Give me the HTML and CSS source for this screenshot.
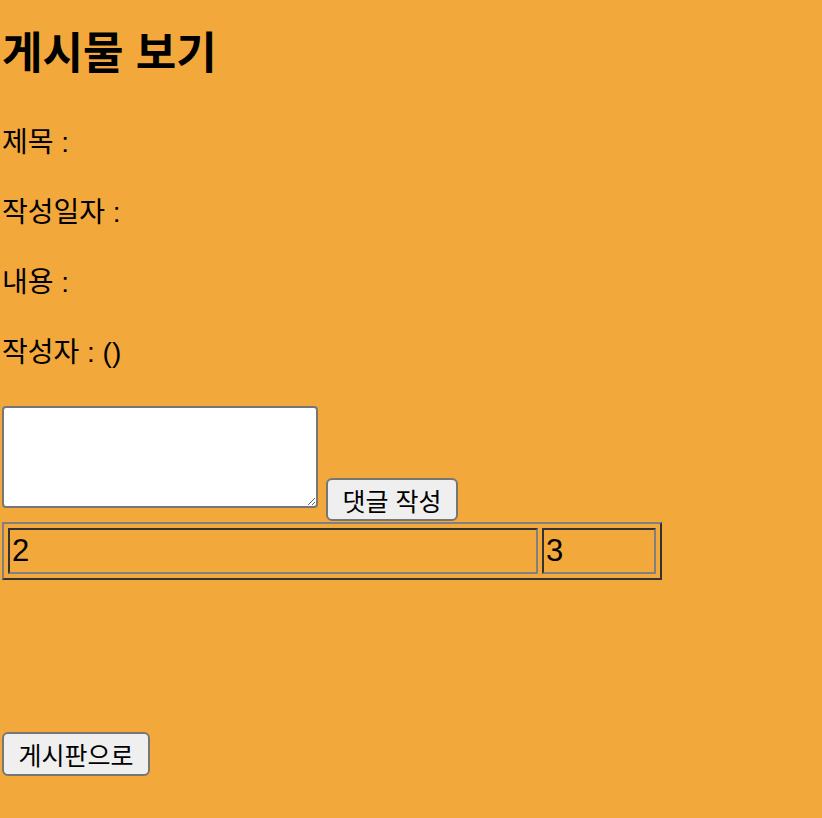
FILE: index.html
```html
<!DOCTYPE html>
<html lang="ko">
<head>
<meta charset="utf-8">
<title>게시물 보기</title>
<link rel="stylesheet" href="styles.css">
</head>
<body>
<div class="page">
  <h1 class="title">게시물 보기</h1>
  <p class="field">제목 : </p>
  <p class="field">작성일자 : </p>
  <p class="field">내용 : </p>
  <p class="field">작성자 : ()</p>
  <form class="comment-form">
    <textarea class="comment-input"></textarea>
    <button type="button" class="btn btn-comment">댓글 작성</button>
  </form>
  <table class="comments">
    <tr>
      <td class="cell cell-wide">2</td>
      <td class="cell cell-narrow">3</td>
    </tr>
  </table>
  <div class="spacer"></div>
  <button type="button" class="btn btn-back">게시판으로</button>
</div>
</body>
</html>
```

FILE: styles.css
```css
html, body {
  margin: 0;
  padding: 0;
  background: #f3a83c;
}
body {
  font-family: "Liberation Sans", "Noto Sans CJK KR", sans-serif;
  color: #000;
}
.page {
  padding: 0 2px;
}
.title {
  margin: 22px 0 40px;
  font-size: 44px;
  line-height: 64px;
  font-weight: 700;
}
.field {
  margin: 36px 0;
  font-size: 28px;
  line-height: 34px;
}
.comment-form {
  display: flex;
  align-items: flex-start;
  gap: 8px;
  margin-top: 36px;
  height: 116px;
}
.comment-input {
  box-sizing: border-box;
  width: 316px;
  height: 102px;
  margin: 0;
  border: 2px solid #767676;
  border-radius: 4px;
  background: #fff;
}
.btn {
  box-sizing: border-box;
  margin: 0;
  background: #efefef;
  border: 2px solid #767676;
  border-radius: 6px;
  font-family: "Liberation Sans", "Noto Sans CJK KR", sans-serif;
  font-size: 25px;
  color: #000;
  padding: 0;
}
.btn-comment {
  margin-top: 72px;
  width: 132px;
  height: 43px;
}
.comments {
  border: 2px solid;
  border-color: #808080 #333 #333 #808080;
  border-spacing: 4px;
  width: 660px;
}
.cell {
  border: 2px solid;
  border-color: #333 #808080 #808080 #333;
  height: 46px;
  box-sizing: border-box;
  padding: 0 2px;
  font-size: 31px;
  line-height: 40px;
}
.cell-wide {
  width: 530px;
}
.spacer {
  height: 152px;
}
.btn-back {
  width: 148px;
  height: 44px;
}
```
